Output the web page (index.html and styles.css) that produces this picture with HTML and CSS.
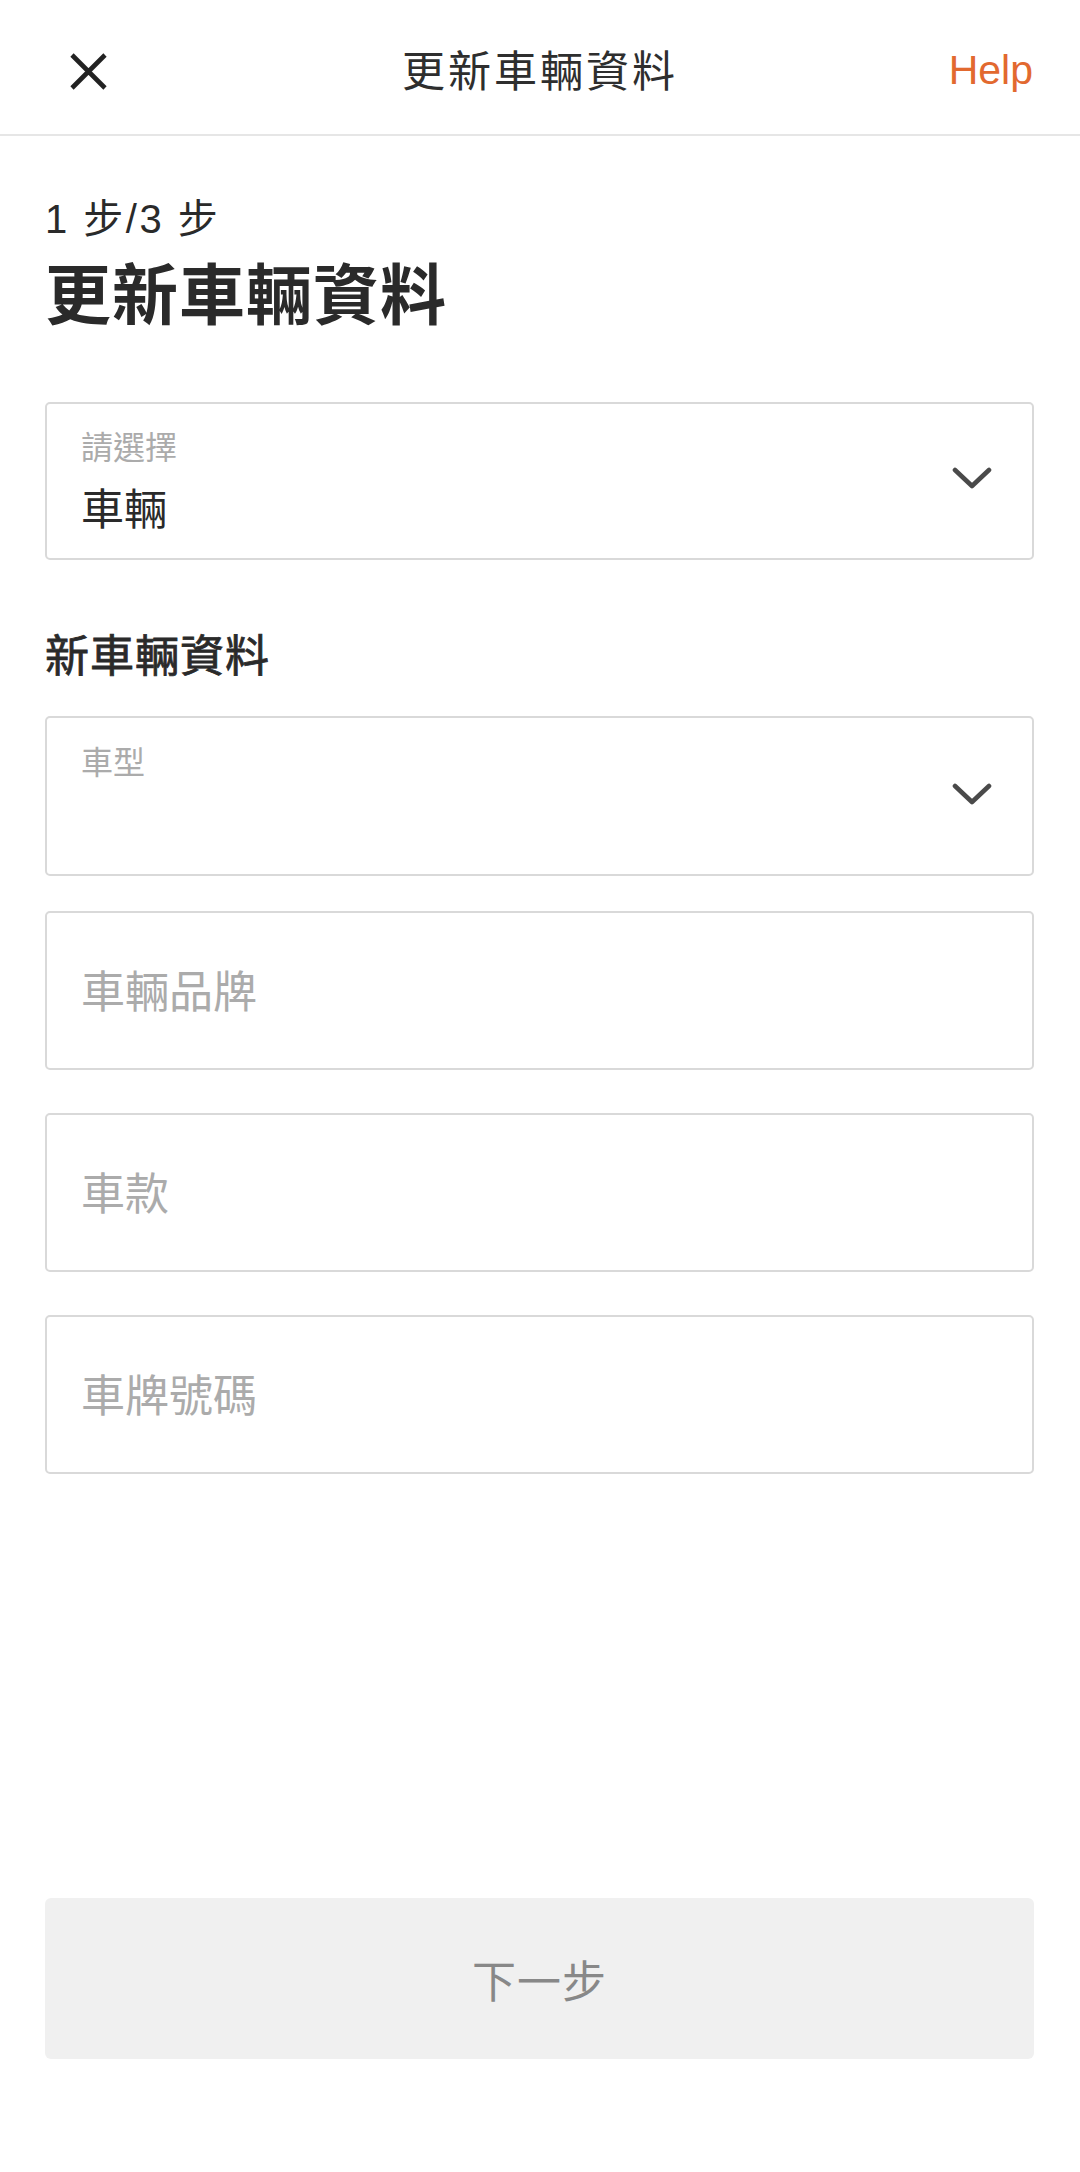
FILE: index.html
```html
<!DOCTYPE html>
<html lang="zh-Hant">
<head>
<meta charset="utf-8">
<title>更新車輛資料</title>
<link rel="stylesheet" href="styles.css">
</head>
<body>
<div class="page">
  <header class="topbar">
    <button class="close" aria-label="close">
      <svg width="39" height="39" viewBox="0 0 39 39"><path d="M3 3 L36 36 M36 3 L3 36" stroke="#222" stroke-width="4.6" stroke-linecap="butt" fill="none"/></svg>
    </button>
    <div class="topbar-title">更新車輛資料</div>
    <a class="help">Help</a>
  </header>

  <main class="content">
    <div class="step">1 步/3 步</div>
    <h1 class="heading">更新車輛資料</h1>

    <div class="field select first">
      <div class="field-text">
        <div class="label">請選擇</div>
        <div class="value">車輛</div>
      </div>
      <svg class="chev" width="40" height="22" viewBox="0 0 40 22"><path d="M3 3 L20 19 L37 3" stroke="#4a4a4a" stroke-width="4.6" stroke-linecap="round" stroke-linejoin="round" fill="none"/></svg>
    </div>

    <h2 class="section">新車輛資料</h2>

    <div class="field select second">
      <div class="field-text">
        <div class="label">車型</div>
        <div class="value"></div>
      </div>
      <svg class="chev chev2" width="40" height="22" viewBox="0 0 40 22"><path d="M3 3 L20 19 L37 3" stroke="#4a4a4a" stroke-width="4.6" stroke-linecap="round" stroke-linejoin="round" fill="none"/></svg>
    </div>

    <div class="field input f3"><span class="placeholder">車輛品牌</span></div>
    <div class="field input f4"><span class="placeholder">車款</span></div>
    <div class="field input f5"><span class="placeholder">車牌號碼</span></div>

    <div class="actions">
      <button class="next">下一步</button>
    </div>
  </main>
</div>
</body>
</html>
```

FILE: styles.css
```css
* { box-sizing: border-box; }
html, body { margin: 0; padding: 0; background: #fff; }
body {
  font-family: "Liberation Sans", "Noto Sans CJK TC", sans-serif;
  color: #2a2a2a;
}
.page {
  min-height: 2172px;
  display: flex;
  flex-direction: column;
}
.topbar {
  height: 136px;
  padding: 10px 47px 0 47px;
  border-bottom: 2px solid #e6e6e6;
  display: grid;
  grid-template-columns: 1fr auto 1fr;
  align-items: center;
}
.close {
  border: 0;
  background: none;
  padding: 0;
  width: 39px;
  height: 39px;
  display: flex;
  margin-top: -2px;
  margin-left: 22px;
  justify-self: start;
}
.topbar-title {
  font-size: 43px;
  line-height: 60px;
  letter-spacing: 3px;
  color: #2e2e2e;
}
.help {
  justify-self: end;
  font-size: 41px;
  line-height: 50px;
  color: #e2692f;
  margin-top: -4px;
}
.content {
  flex: 1;
  display: flex;
  flex-direction: column;
  padding: 59px 46px 113px 45px;
}
.step {
  font-size: 40px;
  line-height: 48px;
  letter-spacing: 2.5px;
  color: #2a2a2a;
}
.heading {
  margin: 13px 0 0;
  font-size: 66px;
  line-height: 80px;
  letter-spacing: 1px;
  font-weight: 700;
  color: #2a2a2a;
}
.field {
  border: 2px solid #d9d9d9;
  border-radius: 5px;
  height: 158px;
  display: flex;
  align-items: center;
}
.select {
  justify-content: space-between;
  padding: 0 40px 0 34px;
}
.first { margin-top: 66px; }
.second { margin-top: 29px; height: 160px; }
.field-text {
  display: flex;
  flex-direction: column;
  padding-top: 4px;
}
.label {
  font-size: 32px;
  line-height: 40px;
  color: #ababab;
}
.value {
  margin-top: 14px;
  font-size: 43px;
  line-height: 56px;
  height: 56px;
  color: #2a2a2a;
}
.chev { margin-bottom: 7px; }
.chev2 { margin-bottom: 5px; }
.section {
  margin: 67px 0 0;
  font-size: 44px;
  line-height: 60px;
  letter-spacing: 1px;
  font-weight: 400;
  -webkit-text-stroke: 0.8px #2a2a2a;
  color: #2a2a2a;
}
.input { padding: 0 34px; }
.placeholder {
  font-size: 44px;
  line-height: 60px;
  color: #ababab;
  padding-top: 4px;
}
.f3 { margin-top: 35px; height: 159px; }
.f4, .f5 { margin-top: 43px; height: 159px; }
.actions {
  margin-top: auto;
}
.next {
  width: 100%;
  height: 161px;
  border: 0;
  border-radius: 6px;
  background: #f0f0f0;
  color: #888;
  font-family: "Liberation Sans", "Noto Sans CJK TC", sans-serif;
  font-size: 44px;
  letter-spacing: 1px;
  padding: 0;
}
```
